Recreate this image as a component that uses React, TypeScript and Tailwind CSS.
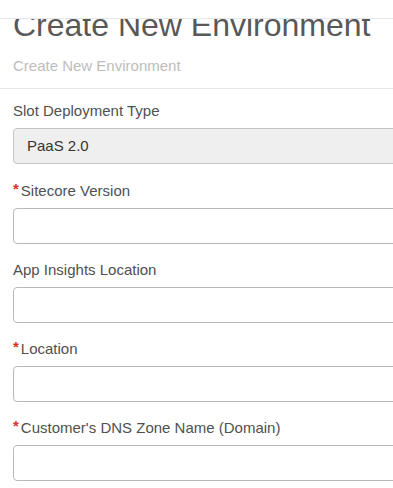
const fields = [
  { label: "Sitecore Version", required: true },
  { label: "App Insights Location", required: false },
  { label: "Location", required: true },
  { label: "Customer's DNS Zone Name (Domain)", required: true },
];

function Label({ text, required }: { text: string; required?: boolean }) {
  return (
    <label className="flex items-start text-[15px] leading-5 text-[#505050] mb-[7px]">
      {required && <span className="text-[#d9302c] text-[15px] leading-4 mr-[2px] font-bold">*</span>}
      {text}
    </label>
  );
}

export default function App() {
  return (
    <div className="relative w-[393px] h-[488px] overflow-hidden bg-white font-['Liberation_Sans',Arial,sans-serif]">
      {/* top bar overlapping the scrolled heading */}
      <div className="absolute top-0 left-0 right-0 h-[19px] bg-white border-b border-[#e2e8ea] z-10" />

      <div className="pl-[13px] pt-[8px]">
        <h1 className="text-[32px] leading-[35px] text-[#585858] whitespace-nowrap">Create New Environment</h1>
        <p className="mt-[13px] text-[15px] leading-5 text-[#bdbdbd]">Create New Environment</p>
      </div>

      <div className="mt-[12px] border-t border-[#e2e8ea]" />

      <div className="pl-[13px] pt-[12px] -mr-[20px]">
        <div className="mb-[17px]">
          <Label text="Slot Deployment Type" />
          <div className="h-9 rounded-[4px] border border-[#c4c4c4] bg-[#efefef] flex items-center pl-[13px] text-[15px] text-[#333]">
            PaaS 2.0
          </div>
        </div>
        {fields.map((f) => (
          <div key={f.label} className="mb-[16px]">
            <Label text={f.label} required={f.required} />
            <div className="h-9 rounded-[4px] border border-[#b9b9b9] bg-white" />
          </div>
        ))}
      </div>
    </div>
  );
}
